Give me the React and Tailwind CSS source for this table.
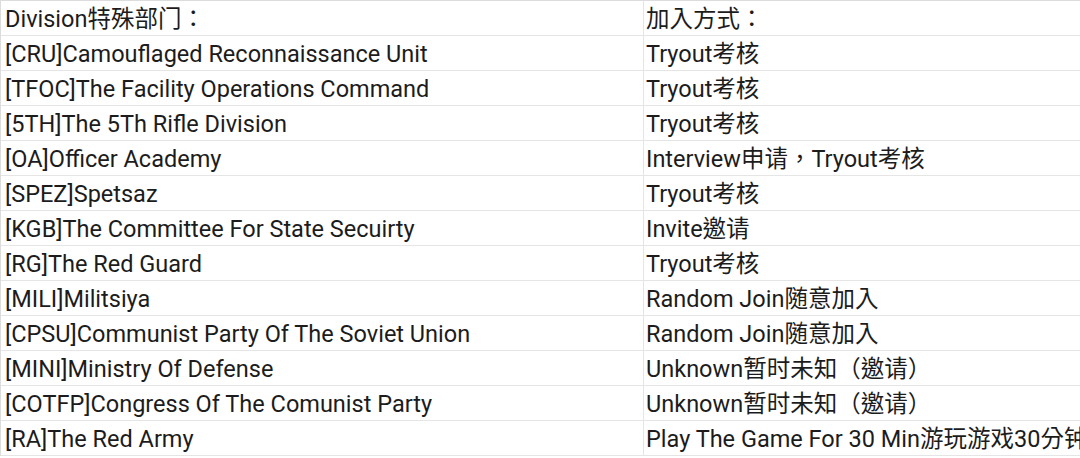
const rows = [
  ['Division特殊部门：', '加入方式：'],
  ['[CRU]Camouflaged Reconnaissance Unit', 'Tryout考核'],
  ['[TFOC]The Facility Operations Command', 'Tryout考核'],
  ['[5TH]The 5Th Rifle Division', 'Tryout考核'],
  ['[OA]Officer Academy', 'Interview申请，Tryout考核'],
  ['[SPEZ]Spetsaz', 'Tryout考核'],
  ['[KGB]The Committee For State Secuirty', 'Invite邀请'],
  ['[RG]The Red Guard', 'Tryout考核'],
  ['[MILI]Militsiya', 'Random Join随意加入'],
  ['[CPSU]Communist Party Of The Soviet Union', 'Random Join随意加入'],
  ['[MINI]Ministry Of Defense', 'Unknown暂时未知（邀请）'],
  ['[COTFP]Congress Of The Comunist Party', 'Unknown暂时未知（邀请）'],
  ['[RA]The Red Army', 'Play The Game For 30 Min游玩游戏30分钟'],
]

export default function App() {
  return (
    <div
      className="w-[1080px] h-[458px] overflow-hidden bg-white text-[#1c1c1c] text-[23.5px]"
      style={{ fontFamily: 'Roboto, "Noto Sans CJK TC", sans-serif' }}
    >
      <div className="border-t border-l border-[#dcdcdc]">
        {rows.map((r, i) => (
          <div key={i} className="grid grid-cols-[643px_1fr] h-[35px] border-b border-[#e5e5e5]">
            <div className="pl-[4px] pt-[2px] border-r border-[#e5e5e5] whitespace-nowrap overflow-hidden leading-[32px]">
              {r[0]}
            </div>
            <div className="pl-[2px] pt-[2px] whitespace-nowrap overflow-hidden leading-[32px]">{r[1]}</div>
          </div>
        ))}
      </div>
    </div>
  )
}
